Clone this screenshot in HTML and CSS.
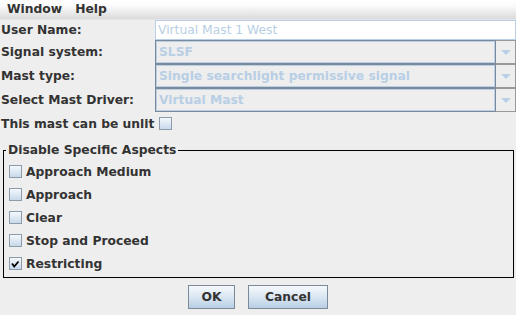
FILE: index.html
```html
<!DOCTYPE html>
<html>
<head>
<meta charset="utf-8">
<link rel="stylesheet" href="styles.css">
</head>
<body>
<div class="menubar">
  <span class="menu first">Window</span>
  <span class="menu">Help</span>
</div>
<div class="form">
  <div class="label">User Name:</div>
  <div class="textfield">Virtual Mast 1 West</div>
  <div class="label">Signal system:</div>
  <div class="combo"><div class="display">SLSF</div><div class="arrow"><span class="tri"></span></div></div>
  <div class="label">Mast type:</div>
  <div class="combo"><div class="display">Single searchlight permissive signal</div><div class="arrow"><span class="tri"></span></div></div>
  <div class="label">Select Mast Driver:</div>
  <div class="combo"><div class="display">Virtual Mast</div><div class="arrow"><span class="tri"></span></div></div>
</div>
<div class="unlit"><span>This mast can be unlit</span><span class="cb"></span></div>
<fieldset class="aspects">
  <legend>Disable Specific Aspects</legend>
  <div class="list">
    <div class="item"><span class="cb"></span>Approach Medium</div>
    <div class="item"><span class="cb"></span>Approach</div>
    <div class="item"><span class="cb"></span>Clear</div>
    <div class="item"><span class="cb"></span>Stop and Proceed</div>
    <div class="item"><span class="cb checked"><svg width="11" height="11" viewBox="0 0 11 11"><path d="M2 5.5 L4.2 8.5 L8.5 3.5" fill="none" stroke="#000" stroke-width="1.8"/></svg></span>Restricting</div>
  </div>
</fieldset>
<div class="buttons">
  <button class="btn ok">OK</button>
  <button class="btn cancel">Cancel</button>
</div>
</body>
</html>
```
FILE: styles.css
```css
html, body {
  margin: 0;
  padding: 0;
  background: #eeeeee;
  font-family: "DejaVu Sans", sans-serif;
  font-size: 12.3px;
  font-weight: bold;
  color: #333333;
  width: 516px;
  height: 315px;
  overflow: hidden;
}
.menubar {
  height: 19px;
  border-bottom: 1px solid #e4e4e4;
  background: linear-gradient(#ffffff, #fbfbfb 30%, #dadada);
  display: flex;
  align-items: center;
  gap: 13px;
  padding-left: 7px;
  line-height: 19px;
}
.form {
  display: grid;
  grid-template-columns: 155px 361px;
  grid-template-rows: 20px 24px 24px 24px;
}
.label {
  padding-left: 1px;
  display: flex;
  align-items: center;
}
.textfield {
  background: #ffffff;
  border: 1px solid #b8cfe5;
  font-weight: normal;
  color: #b8cfe5;
  padding-left: 2px;
  line-height: 18px;
}
.combo {
  display: flex;
  height: 24px;
}
.display {
  flex: 1;
  border: 1px solid #7a8a99;
  box-shadow: inset 0 0 0 1px #b8cfe5;
  color: #b8cfe5;
  padding-left: 3px;
  line-height: 22px;
}
.arrow {
  width: 19px;
  border: 1px solid #999999;
  border-left: none;
  display: flex;
  align-items: center;
  justify-content: center;
}
.tri {
  width: 0;
  height: 0;
  border-left: 5px solid transparent;
  border-right: 5px solid transparent;
  border-top: 5px solid #b8cfe5;
  margin-top: 1px;
}
.unlit {
  height: 23px;
  display: flex;
  align-items: center;
  padding-left: 1px;
}
.unlit .cb {
  margin-left: 5px;
}
.cb {
  width: 11px;
  height: 11px;
  border: 1px solid #8b9cad;
  background: linear-gradient(#f4f8fc, #c8d9ea);
  display: inline-flex;
  align-items: center;
  justify-content: center;
  flex: none;
}
.aspects {
  margin: 8px 2px 0 3px;
  padding: 0;
  border: 1px solid #000000;
}
.aspects legend {
  margin-left: 2px;
  padding: 0 2px;
  line-height: 15px;
}
.list {
  padding: 2px 0 2px 5px;
}
.item {
  height: 23px;
  display: flex;
  align-items: center;
  gap: 4px;
}
.buttons {
  margin-top: 7px;
  display: flex;
  justify-content: center;
  gap: 13px;
}
.btn {
  height: 24px;
  border: 1px solid #7a8a99;
  background: linear-gradient(#f6f9fc, #dde8f3 45%, #b8cfe5);
  font-family: "DejaVu Sans", sans-serif;
  font-size: 12.3px;
  font-weight: bold;
  color: #333333;
  padding: 0;
  margin: 0;
}
.ok { width: 47px; }
.cancel { width: 80px; }
```
